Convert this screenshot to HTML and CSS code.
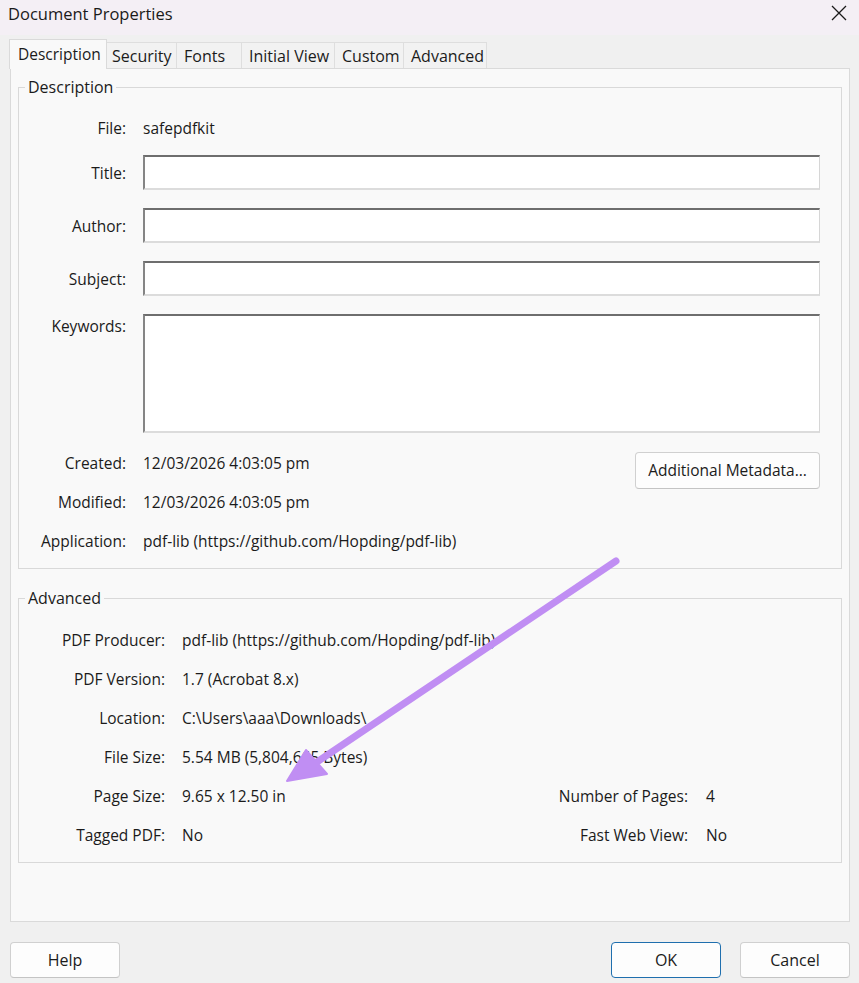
FILE: index.html
```html
<!DOCTYPE html>
<html lang="en">
<head>
<meta charset="utf-8">
<title>Document Properties</title>
<link rel="stylesheet" href="styles.css">
</head>
<body>
<div class="window">
  <header class="titlebar">
    <span class="title">Document Properties</span>
    <button class="close" aria-label="Close">
      <svg width="16" height="16" viewBox="0 0 16 16"><path d="M1 1 L15 15 M15 1 L1 15" stroke="#1a1a1a" stroke-width="1.3" fill="none"/></svg>
    </button>
  </header>

  <nav class="tabs">
    <div class="tab tab-active tab-desc">Description</div>
    <div class="tab tab-sec">Security</div>
    <div class="tab tab-fonts">Fonts</div>
    <div class="tab tab-iv">Initial View</div>
    <div class="tab tab-custom">Custom</div>
    <div class="tab tab-adv">Advanced</div>
  </nav>

  <section class="panel">
    <div class="group group-desc">
      <div class="legend">Description</div>
      <div class="form">
        <div class="row row-text">
          <span class="label">File:</span>
          <span class="value">safepdfkit</span>
        </div>
        <div class="row row-field">
          <label class="label">Title:</label>
          <input class="field" type="text">
        </div>
        <div class="row row-field">
          <label class="label">Author:</label>
          <input class="field" type="text">
        </div>
        <div class="row row-field">
          <label class="label">Subject:</label>
          <input class="field" type="text">
        </div>
        <div class="row row-area">
          <label class="label">Keywords:</label>
          <textarea class="field field-area"></textarea>
        </div>
        <div class="meta">
          <div class="meta-rows">
            <div class="row row-text">
              <span class="label">Created:</span>
              <span class="value">12/03/2026 4:03:05 pm</span>
            </div>
            <div class="row row-text">
              <span class="label">Modified:</span>
              <span class="value">12/03/2026 4:03:05 pm</span>
            </div>
            <div class="row row-text">
              <span class="label">Application:</span>
              <span class="value">pdf-lib (https://github.com/Hopding/pdf-lib)</span>
            </div>
          </div>
          <button class="btn btn-meta">Additional Metadata...</button>
        </div>
      </div>
    </div>

    <div class="group group-adv">
      <div class="legend">Advanced</div>
      <div class="adv">
        <div class="adv-row">
          <span class="adv-label">PDF Producer:</span>
          <span class="value">pdf-lib (https://github.com/Hopding/pdf-lib)</span>
        </div>
        <div class="adv-row">
          <span class="adv-label">PDF Version:</span>
          <span class="value">1.7 (Acrobat 8.x)</span>
        </div>
        <div class="adv-row">
          <span class="adv-label">Location:</span>
          <span class="value">C:\Users\aaa\Downloads\</span>
        </div>
        <div class="adv-row">
          <span class="adv-label">File Size:</span>
          <span class="value">5.54 MB (5,804,665 Bytes)</span>
        </div>
        <div class="adv-row">
          <span class="adv-label">Page Size:</span>
          <span class="value">9.65 x 12.50 in</span>
          <span class="adv-right">
            <span class="adv-rlabel">Number of Pages:</span>
            <span class="adv-rvalue">4</span>
          </span>
        </div>
        <div class="adv-row">
          <span class="adv-label">Tagged PDF:</span>
          <span class="value">No</span>
          <span class="adv-right">
            <span class="adv-rlabel">Fast Web View:</span>
            <span class="adv-rvalue">No</span>
          </span>
        </div>
      </div>
    </div>
  </section>

  <footer class="buttons">
    <button class="btn btn-foot">Help</button>
    <span class="spacer"></span>
    <button class="btn btn-foot btn-default">OK</button>
    <button class="btn btn-foot">Cancel</button>
  </footer>

  <svg class="arrow" width="859" height="983" viewBox="0 0 859 983" aria-hidden="true">
    <line x1="616" y1="561" x2="314" y2="764" stroke="#c08ef3" stroke-width="7" stroke-linecap="round"/>
    <polygon points="287,781 327,774 306,750" fill="#c08ef3" stroke="#c08ef3" stroke-width="2" stroke-linejoin="round"/>
  </svg>
</div>
</body>
</html>
```

FILE: styles.css
```css
* {
  box-sizing: border-box;
}

html, body {
  margin: 0;
  padding: 0;
}

body {
  width: 859px;
  height: 983px;
  overflow: hidden;
  background: #f0f0f0;
  font-family: "Open Sans", "Noto Sans", sans-serif;
  font-size: 15.5px;
  color: #1b1b1b;
}

.window {
  position: relative;
  width: 859px;
  height: 983px;
  background: #f0f0f0;
}

/* Title bar */
.titlebar {
  height: 35px;
  background: #f4eff5;
  display: flex;
  align-items: flex-start;
  padding-left: 8px;
}

.title {
  font-size: 16.5px;
  line-height: 27px;
  color: #1a1a1a;
}

.close {
  margin-left: auto;
  margin-right: 11px;
  margin-top: 4px;
  width: 18px;
  height: 18px;
  padding: 1px;
  border: none;
  background: transparent;
  display: flex;
  align-items: center;
  justify-content: center;
}

/* Tabs */
.tabs {
  height: 33px;
  display: flex;
  align-items: flex-end;
  padding-left: 9px;
}

.tab {
  height: 26px;
  padding: 1px 0 0 7px;
  line-height: 24px;
  font-size: 16px;
  background: #f2f2f2;
  border-top: 1px solid #dedede;
  border-right: 1px solid #dedede;
  white-space: nowrap;
  color: #1b1b1b;
}

.tab-active {
  position: relative;
  z-index: 1;
  height: 30px;
  margin-bottom: -1px;
  padding: 2px 0 0 8px;
  background: #f9f9f9;
  border: 1px solid #dadada;
  border-bottom: none;
  font-size: 15.5px;
}

.tab-desc { width: 98px; }
.tab-sec { width: 70px; padding-left: 5px; }
.tab-fonts { width: 65px; }
.tab-iv { width: 93px; }
.tab-custom { width: 69px; }
.tab-adv { width: 83px; }

/* Panel */
.panel {
  margin: 0 9px 0 10px;
  height: 854px;
  background: #f9f9f9;
  border: 1px solid #dadada;
  display: flex;
  flex-direction: column;
}

.group {
  margin: 18px 7px 0 7px;
  border: 1px solid #d9d9d9;
}

.group-adv {
  margin-top: 29px;
}

.legend {
  margin: -11px 0 0 6px;
  padding: 0 3px;
  width: max-content;
  line-height: 20px;
  background: #f9f9f9;
  font-size: 16px;
}

/* Description form */
.form {
  padding: 19px 21px 15px 0;
  display: flex;
  flex-direction: column;
}

.row {
  display: flex;
  align-items: center;
}

.row-text {
  height: 24px;
  line-height: 24px;
  white-space: nowrap;
}

.form > .row-text {
  margin-bottom: 15px;
}

.row-field {
  height: 35px;
  margin-bottom: 18px;
}

.row-area {
  height: 119px;
  align-items: flex-start;
}

.row-area .label {
  line-height: 24px;
}

.label {
  width: 107px;
  flex: none;
  margin-right: 17px;
  text-align: right;
}

.value {
  white-space: nowrap;
}

.field {
  flex: 1;
  height: 100%;
  margin: 0;
  padding: 4px 6px;
  background: #ffffff;
  border-top: 2px solid #6e6e6e;
  border-left: 2px solid #858585;
  border-right: 1px solid #d6d6d6;
  border-bottom: 2px solid #dcdcdc;
  border-radius: 0;
  font: inherit;
  outline: none;
}

.field-area {
  resize: none;
}

.meta {
  margin-top: 18px;
  display: flex;
  align-items: flex-start;
}

.meta-rows {
  display: flex;
  flex-direction: column;
  gap: 15px;
}

.btn {
  font-family: "Open Sans", "Noto Sans", sans-serif;
  font-size: 15.5px;
  color: #1b1b1b;
  background: #fdfdfd;
  border: 1px solid #d0d0d0;
  border-bottom-color: #c4c4c4;
  border-radius: 4px;
  padding: 0;
}

.btn-meta {
  margin-left: auto;
  margin-top: 1px;
  width: 185px;
  height: 37px;
  line-height: 35px;
}

/* Advanced */
.adv {
  padding: 20px 0 15px 0;
  display: flex;
  flex-direction: column;
  gap: 15px;
}

.adv-row {
  display: flex;
  align-items: center;
  height: 24px;
  line-height: 24px;
  white-space: nowrap;
}

.adv-label {
  width: 146px;
  flex: none;
  margin-right: 17px;
  text-align: right;
}

.adv-right {
  margin-left: auto;
  display: flex;
}

.adv-rlabel {
  text-align: right;
}

.adv-rvalue {
  width: 135px;
  margin-left: 18px;
}

/* Footer buttons */
.buttons {
  margin-top: 20px;
  padding: 0 9px 0 10px;
  display: flex;
  gap: 19px;
}

.spacer {
  flex: 1;
}

.btn-foot {
  width: 110px;
  height: 36px;
  line-height: 34px;
  font-size: 16px;
}

.btn-default {
  border: 1px solid #1f6fae;
  border-bottom-color: #1f6fae;
}

/* Annotation overlay */
.arrow {
  position: absolute;
  left: 0;
  top: 0;
  pointer-events: none;
}
```
